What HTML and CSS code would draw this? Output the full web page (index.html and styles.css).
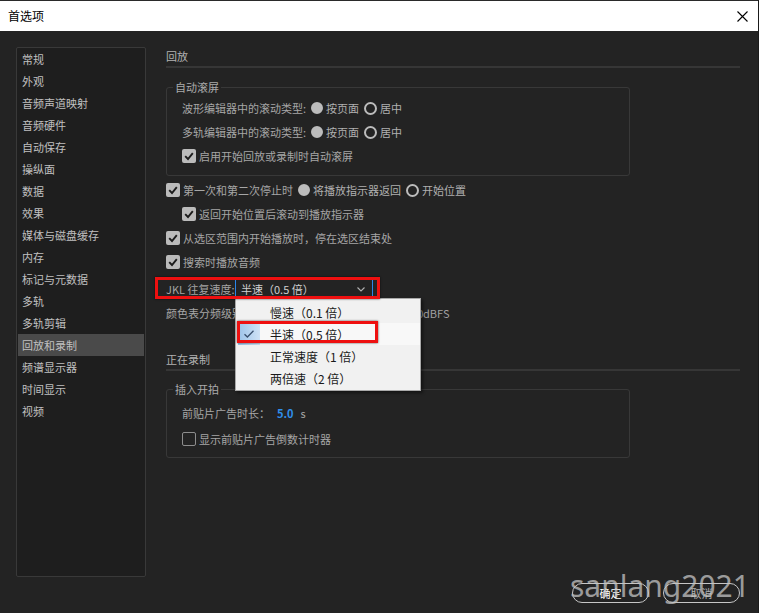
FILE: index.html
```html
<!DOCTYPE html>
<html lang="zh-CN">
<head>
<meta charset="utf-8">
<title>首选项</title>
<link rel="stylesheet" href="styles.css">
</head>
<body>
<div class="window">
  <header class="titlebar">
    <span class="title">首选项</span>
    <svg class="close" width="11" height="11" viewBox="0 0 11 11"><path d="M0.5 0.5 L10.5 10.5 M10.5 0.5 L0.5 10.5" stroke="#000" stroke-width="1.1" fill="none"/></svg>
  </header>
  <div class="main">
    <nav class="sidebar">
      <ul class="nav-list">
        <li>常规</li>
        <li>外观</li>
        <li>音频声道映射</li>
        <li>音频硬件</li>
        <li>自动保存</li>
        <li>操纵面</li>
        <li>数据</li>
        <li>效果</li>
        <li>媒体与磁盘缓存</li>
        <li>内存</li>
        <li>标记与元数据</li>
        <li>多轨</li>
        <li>多轨剪辑</li>
        <li class="active">回放和录制</li>
        <li>频谱显示器</li>
        <li>时间显示</li>
        <li>视频</li>
      </ul>
    </nav>
    <section class="content">
      <h2 class="section-title">回放</h2>
      <fieldset class="group group-scroll">
        <legend>自动滚屏</legend>
        <div class="row">
          <span>波形编辑器中的滚动类型:</span>
          <span class="radio on"></span><span class="opt">按页面</span>
          <span class="radio"></span><span class="opt">居中</span>
        </div>
        <div class="row">
          <span>多轨编辑器中的滚动类型:</span>
          <span class="radio on"></span><span class="opt">按页面</span>
          <span class="radio"></span><span class="opt">居中</span>
        </div>
        <div class="row">
          <span class="check on"><svg width="14" height="14" viewBox="0 0 14 14"><path d="M3.2 7.2 L6 10 L10.8 4.2" stroke="#1c1c1c" stroke-width="1.9" fill="none"/></svg></span>
          <span class="clabel">启用开始回放或录制时自动滚屏</span>
        </div>
      </fieldset>
      <div class="row first-stop">
        <span class="check on"><svg width="14" height="14" viewBox="0 0 14 14"><path d="M3.2 7.2 L6 10 L10.8 4.2" stroke="#1c1c1c" stroke-width="1.9" fill="none"/></svg></span>
        <span class="clabel">第一次和第二次停止时</span>
        <span class="radio on"></span><span class="opt">将播放指示器返回</span>
        <span class="radio"></span><span class="opt">开始位置</span>
      </div>
      <div class="row indent">
        <span class="check on"><svg width="14" height="14" viewBox="0 0 14 14"><path d="M3.2 7.2 L6 10 L10.8 4.2" stroke="#1c1c1c" stroke-width="1.9" fill="none"/></svg></span>
        <span class="clabel">返回开始位置后滚动到播放指示器</span>
      </div>
      <div class="row">
        <span class="check on"><svg width="14" height="14" viewBox="0 0 14 14"><path d="M3.2 7.2 L6 10 L10.8 4.2" stroke="#1c1c1c" stroke-width="1.9" fill="none"/></svg></span>
        <span class="clabel">从选区范围内开始播放时，停在选区结束处</span>
      </div>
      <div class="row">
        <span class="check on"><svg width="14" height="14" viewBox="0 0 14 14"><path d="M3.2 7.2 L6 10 L10.8 4.2" stroke="#1c1c1c" stroke-width="1.9" fill="none"/></svg></span>
        <span class="clabel">搜索时播放音频</span>
      </div>
      <div class="row jkl">
        <span class="jkl-label">JKL 往复速度:</span>
        <div class="dropdown">
          <span class="dd-value">半速（0.5 倍）</span>
          <svg class="chev" width="8" height="5" viewBox="0 0 8 5"><path d="M0.5 0.5 L4 4 L7.5 0.5" stroke="#b0b0b0" stroke-width="1.1" fill="none"/></svg>
          <ul class="menu">
            <li class="menu-item"><span class="mcheck"></span><span>慢速（0.1 倍）</span></li>
            <li class="menu-item selected"><span class="mcheck"><svg width="12" height="10" viewBox="0 0 12 10"><path d="M1.5 5.2 L4.4 8 L10.5 1.8" stroke="#39506e" stroke-width="1.3" fill="none"/></svg></span><span>半速（0.5 倍）</span></li>
            <li class="menu-item"><span class="mcheck"></span><span>正常速度（1 倍）</span></li>
            <li class="menu-item"><span class="mcheck"></span><span>两倍速（2 倍）</span></li>
            <li class="mark mark-item"></li>
          </ul>
        </div>
        <span class="mark mark-row"></span>
      </div>
      <div class="row">
        <span class="meter-label">颜色表分频级别:</span>
        <span class="meter-val">120</span>
        <span class="unit">dBFS</span>
      </div>
      <h2 class="section-title rec-title">正在录制</h2>
      <fieldset class="group group-preroll">
        <legend>插入开拍</legend>
        <div class="row">
          <span>前贴片广告时长：</span>
          <span class="num">5.0</span><span class="unit-s">s</span>
        </div>
        <div class="row second">
          <span class="check"></span>
          <span class="clabel">显示前贴片广告倒数计时器</span>
        </div>
      </fieldset>
    </section>
  </div>
  <footer class="footer">
    <button class="btn primary">确定</button>
    <button class="btn">取消</button>
  </footer>
  <div class="watermark">sanlang2021</div>
</div>
</body>
</html>
```

FILE: styles.css
```css
* { box-sizing: border-box; }
html, body { margin: 0; padding: 0; }
body {
  background: #232323;
  font-family: "Noto Sans", "Noto Sans CJK SC", sans-serif;
  font-size: 11px;
  color: #a6a6a6;
}
ul { list-style: none; margin: 0; padding: 0; }

.window {
  position: relative;
  width: 759px;
  height: 613px;
  background: #232323;
  border-right: 1px solid #1a1a1a;
  overflow: hidden;
}

.titlebar {
  height: 31px;
  border-top: 1px solid #2a2a2a;
  background: #ffffff;
  display: flex;
  align-items: center;
  justify-content: space-between;
  padding: 0 10px 0 8px;
}
.title {
  font-family: "Noto Sans CJK SC", sans-serif;
  font-size: 12px;
  color: #000;
  line-height: 16px;
}
.close { display: block; }

.main {
  display: flex;
  height: 546px;
  padding: 16px 18px 0 16px;
}

.sidebar {
  width: 130px;
  height: 530px;
  flex: none;
  background: #1e1e1e;
  border: 1px solid #393939;
  border-radius: 2px;
}
.nav-list { padding: 0 1px; }
.nav-list li {
  height: 22px;
  line-height: 22px;
  padding-left: 4px;
  color: #c0c0c0;
  font-family: "Noto Sans CJK SC", sans-serif;
}
.nav-list li.active { background: #4a4a4a; }

.content {
  margin-left: 20px;
  width: 575px;
  font-family: "Noto Sans CJK SC", sans-serif;
}

.section-title {
  margin: 0;
  height: 21px;
  line-height: 19px;
  font-size: 11px;
  font-weight: normal;
  color: #b2b2b2;
  border-bottom: 2px solid #363636;
}
.rec-title { margin-top: 25px; }

.group {
  margin: 11px 0 0 0;
  width: 464px;
  padding: 1px 0 7px 0;
  border: 1px solid #383838;
  border-radius: 3px;
  min-width: 0;
}
.group legend {
  margin-left: 6px;
  padding: 0 2px;
  line-height: 16px;
  color: #ababab;
}
.group .row { padding-left: 15px; }
.group-preroll { margin-top: 10px; padding: 4px 0 6px 0; }
.group-preroll .second { margin-top: 2px; }

.row {
  display: flex;
  align-items: center;
  height: 24px;
  white-space: nowrap;
}
.row.indent { padding-left: 16px; }
.first-stop { margin-top: 2px; }

.radio {
  width: 13px;
  height: 13px;
  border-radius: 50%;
  flex: none;
  margin-left: 5px;
  border: 2px solid #bcbcbc;
}
.radio.on { width: 12px; height: 12px; background: #bcbcbc; border-color: #bcbcbc; }
.opt { margin-left: 3px; color: #b0b0b0; }
.radio + .opt + .radio { margin-left: 5px; }

.check {
  width: 14px;
  height: 14px;
  flex: none;
  border-radius: 2px;
  border: 1.5px solid #8d8d8d;
  display: flex;
  align-items: center;
  justify-content: center;
}
.check.on { background: #bbbbbb; border: none; }
.check svg { display: block; }
.clabel { margin-left: 3px; }

.jkl { margin-top: 3px; position: relative; }
.jkl-label { width: 69px; flex: none; color: #a4a4a4; }
.dropdown {
  position: relative;
  width: 138px;
  height: 18px;
  flex: none;
  border-left: 1px solid #2a86e8;
  border-right: 1px solid #2a86e8;
  display: flex;
  align-items: center;
  justify-content: space-between;
  padding: 0 5px;
  color: #d0d0d0;
}
.chev { display: block; margin-right: 2px; }

.menu {
  position: absolute;
  top: 18px;
  left: -1px;
  width: 186px;
  padding: 2px 0 1px 0;
  background: #f1f1f1;
  border: 1px solid #a9a9a9;
  box-shadow: 2px 2px 3px rgba(0, 0, 0, 0.45);
  z-index: 5;
}
.menu-item {
  height: 22px;
  display: flex;
  align-items: center;
  font-size: 12px;
  color: #1a1a1a;
}
.mcheck {
  width: 22px;
  height: 22px;
  margin-left: 2px;
  flex: none;
  display: flex;
  align-items: center;
  justify-content: center;
}
.menu-item > span + span { margin-left: 10px; }
.menu-item.selected { background: #f8f8f8; }
.menu-item.selected .mcheck {
  background: linear-gradient(to right, #9cc3e9, #cfe2f5);
}

.mark {
  position: absolute;
  border: 3px solid #ee1010;
  box-shadow: 0 0 2px rgba(0, 0, 0, 0.7);
  z-index: 6;
}
.mark-row { left: -11px; top: 0; width: 225px; height: 22px; }
.mark-item { left: 1px; top: 22px; width: 141px; height: 22px; }

.meter-label { width: 239px; flex: none; }
.meter-val { width: 14px; text-align: right; flex: none; }
.unit { margin-left: 4px; color: #a0a0a0; }

.num { margin-left: 7px; color: #2f8eea; font-weight: bold; }
.unit-s { margin-left: 7px; }

.footer {
  display: flex;
  justify-content: flex-end;
  gap: 14px;
  padding: 6px 18px 0 0;
}
.btn {
  width: 77px;
  height: 20px;
  border-radius: 10px;
  border: 1.5px solid #c6c6c6;
  background: transparent;
  font-family: "Noto Sans CJK SC", sans-serif;
  font-size: 11px;
  color: #b0b0b0;
  padding: 0;
  line-height: 16px;
}
.btn.primary { color: #ffffff; }

.watermark {
  position: absolute;
  left: 570px;
  top: 571px;
  font-family: "Noto Sans", sans-serif;
  font-size: 30px;
  line-height: 30px;
  color: rgba(196, 196, 196, 0.75);
  pointer-events: none;
}
```
